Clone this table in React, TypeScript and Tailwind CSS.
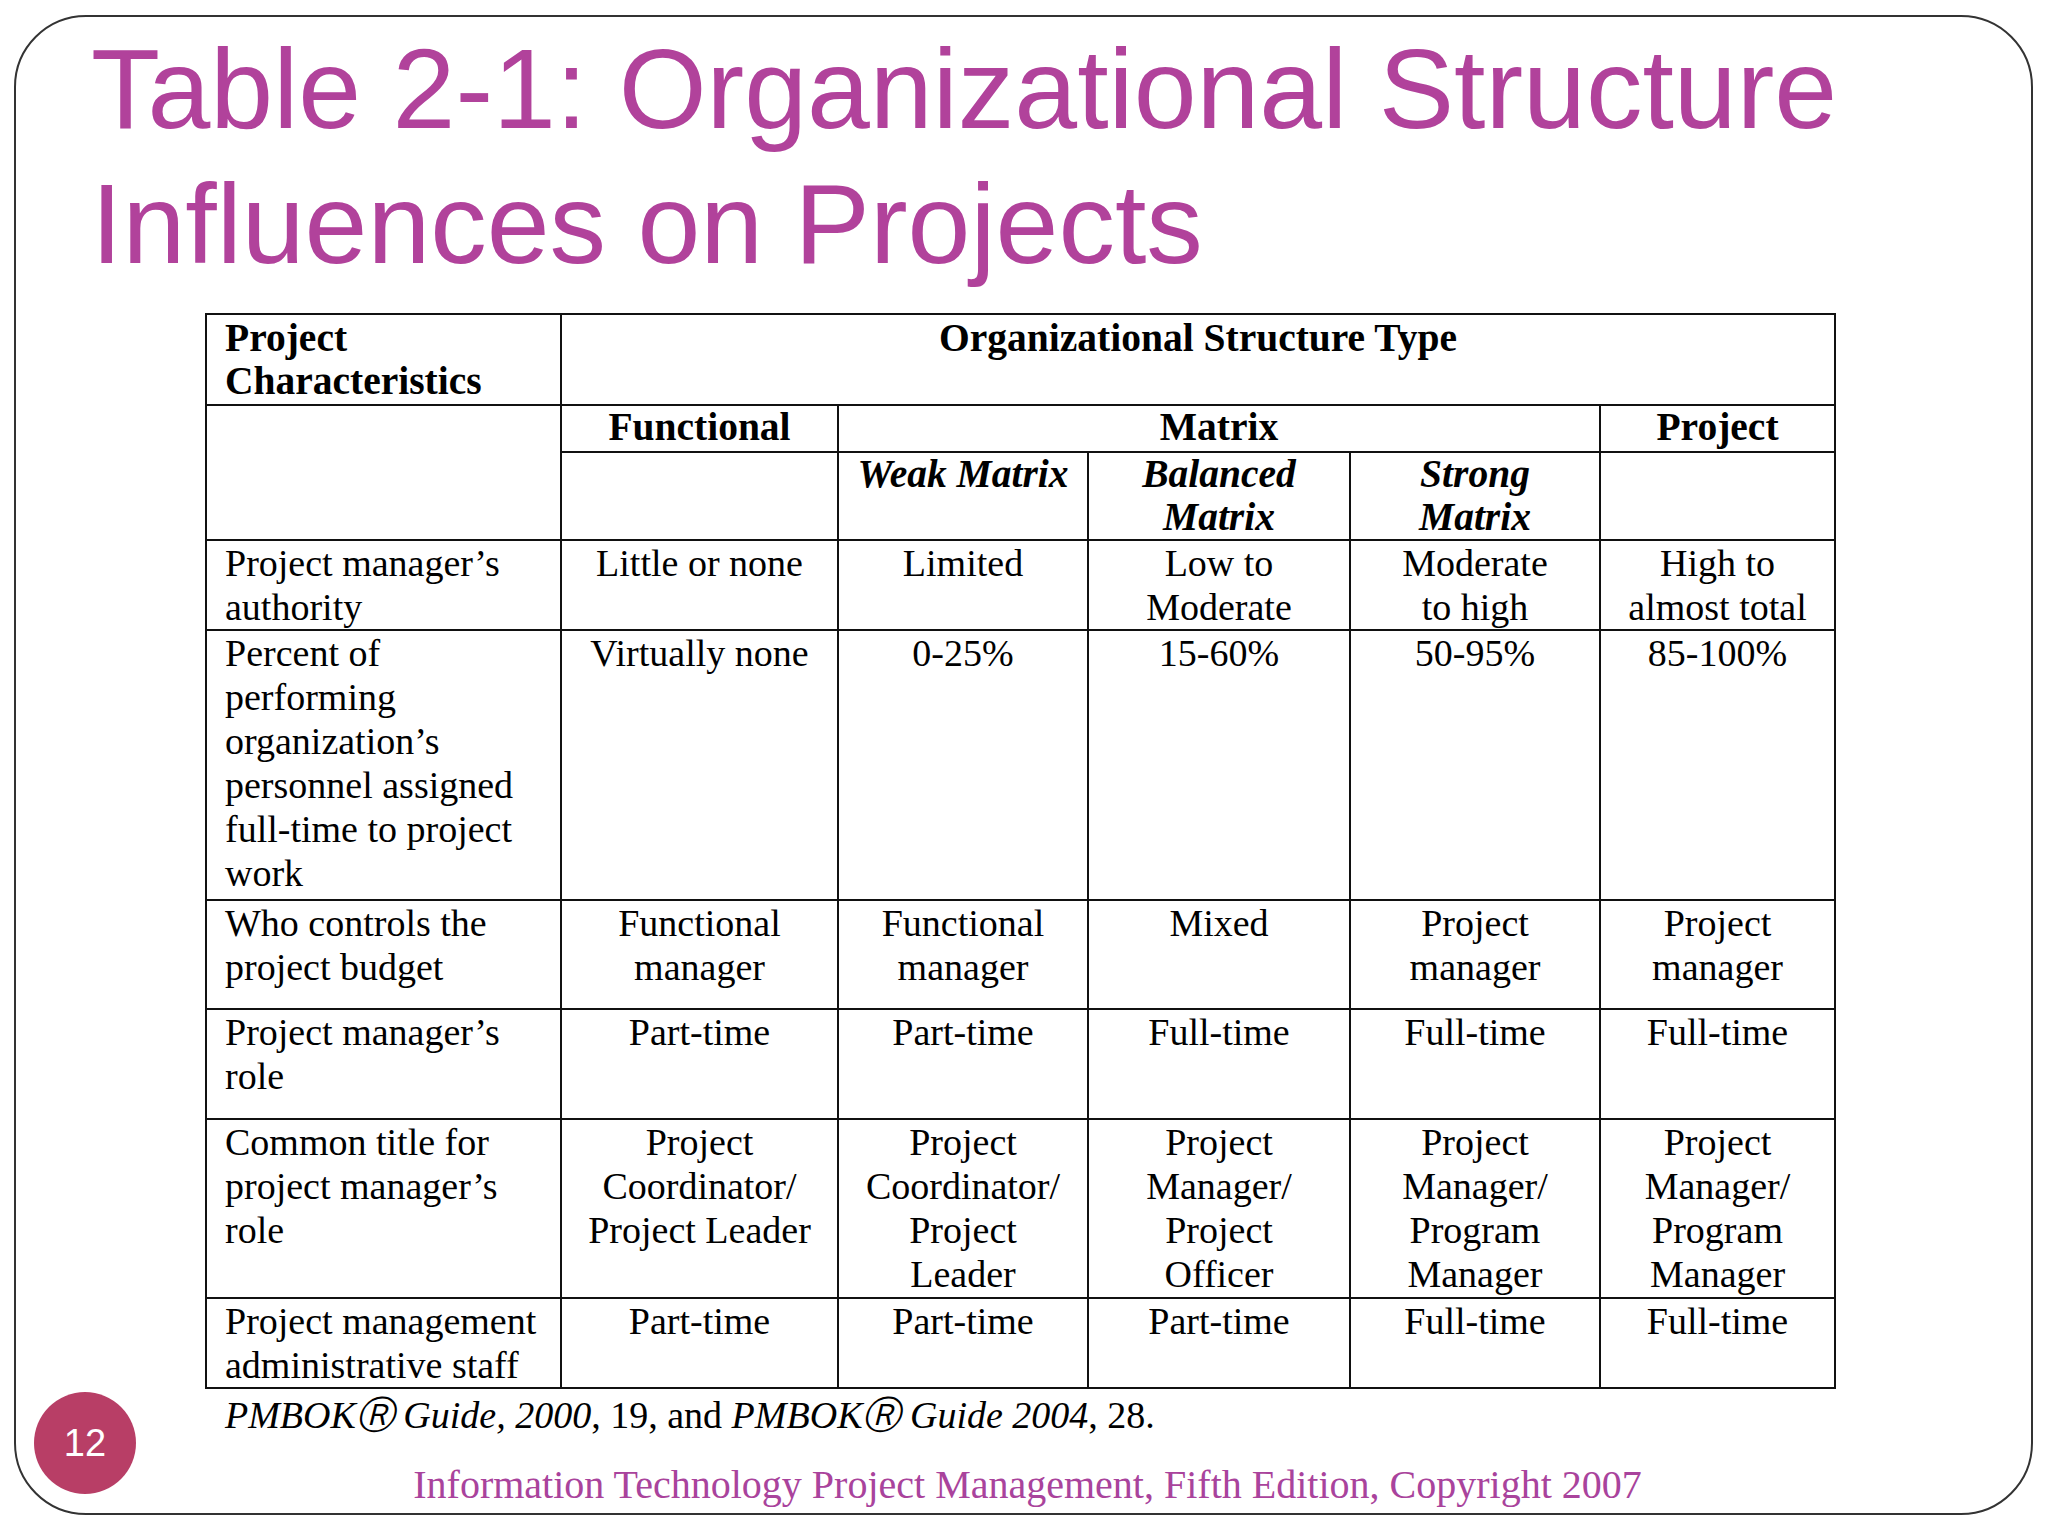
const serif = { fontFamily: '"Liberation Serif", "Times New Roman", serif' };

type Row = { h: string; cells: string[][] };

const body: Row[] = [
  {
    h: 'h-[90px]',
    cells: [
      ['Project manager’s', 'authority'],
      ['Little or none'],
      ['Limited'],
      ['Low to', 'Moderate'],
      ['Moderate', 'to high'],
      ['High to', 'almost total'],
    ],
  },
  {
    h: 'h-[270px]',
    cells: [
      ['Percent of', 'performing', 'organization’s', 'personnel assigned', 'full-time to project', 'work'],
      ['Virtually none'],
      ['0-25%'],
      ['15-60%'],
      ['50-95%'],
      ['85-100%'],
    ],
  },
  {
    h: 'h-[109px]',
    cells: [
      ['Who controls the', 'project budget'],
      ['Functional', 'manager'],
      ['Functional', 'manager'],
      ['Mixed'],
      ['Project', 'manager'],
      ['Project', 'manager'],
    ],
  },
  {
    h: 'h-[110px]',
    cells: [['Project manager’s', 'role'], ['Part-time'], ['Part-time'], ['Full-time'], ['Full-time'], ['Full-time']],
  },
  {
    h: 'h-[179px]',
    cells: [
      ['Common title for', 'project manager’s', 'role'],
      ['Project', 'Coordinator/', 'Project Leader'],
      ['Project', 'Coordinator/', 'Project', 'Leader'],
      ['Project', 'Manager/', 'Project', 'Officer'],
      ['Project', 'Manager/', 'Program', 'Manager'],
      ['Project', 'Manager/', 'Program', 'Manager'],
    ],
  },
  {
    h: 'h-[90px]',
    cells: [
      ['Project management', 'administrative staff'],
      ['Part-time'],
      ['Part-time'],
      ['Part-time'],
      ['Full-time'],
      ['Full-time'],
    ],
  },
];

function Lines({ lines }: { lines: string[] }) {
  return (
    <>
      {lines.map((l, i) => (
        <div key={i}>{l}</div>
      ))}
    </>
  );
}

const cell = 'border-2 border-[#111] align-top p-0';

export default function App() {
  return (
    <div className="w-[2048px] h-[1536px] bg-white pt-[15px] pl-[14px]">
      <div className="relative w-[2019px] h-[1500px] border-2 border-[#333] rounded-[72px] flex flex-col">
        <h1
          className="mt-[5px] pl-[75px] text-[113px] leading-[135px] text-[#b1429b]"
          style={{ fontFamily: '"Liberation Sans", Arial, sans-serif' }}
        >
          Table 2-1: Organizational Structure
          <br />
          Influences on Projects
        </h1>

        <div className="ml-[189px] mt-[21px] text-[38px] leading-[44px] text-black" style={serif}>
          <table className="table-fixed border-collapse w-[1629px]">
            <colgroup>
              <col className="w-[355px]" />
              <col className="w-[277px]" />
              <col className="w-[250px]" />
              <col className="w-[262px]" />
              <col className="w-[250px]" />
              <col className="w-[235px]" />
            </colgroup>
            <tbody>
              <tr className="h-[91px] font-bold text-[39.5px]">
                <td className={`${cell} pl-[18px] leading-[43px] pt-[2px]`}>
                  Project
                  <br />
                  Characteristics
                </td>
                <td className={`${cell} text-center leading-[43px] pt-[2px]`} colSpan={5}>
                  Organizational Structure Type
                </td>
              </tr>
              <tr className="h-[47px] font-bold text-[39.5px] leading-[43px]">
                <td className={cell} rowSpan={2}></td>
                <td className={`${cell} text-center`}>Functional</td>
                <td className={`${cell} text-center`} colSpan={3}>
                  Matrix
                </td>
                <td className={`${cell} text-center`}>Project</td>
              </tr>
              <tr className="h-[88px] font-bold italic text-[39.5px] leading-[43px]">
                <td className={cell}></td>
                <td className={`${cell} text-center`}>Weak Matrix</td>
                <td className={`${cell} text-center`}>
                  Balanced
                  <br />
                  Matrix
                </td>
                <td className={`${cell} text-center`}>
                  Strong
                  <br />
                  Matrix
                </td>
                <td className={cell}></td>
              </tr>
              {body.map((row, r) => (
                <tr key={r} className={row.h}>
                  {row.cells.map((lines, c) => (
                    <td key={c} className={c === 0 ? `${cell} pl-[18px] whitespace-nowrap` : `${cell} text-center whitespace-nowrap`}>
                      <Lines lines={lines} />
                    </td>
                  ))}
                </tr>
              ))}
            </tbody>
          </table>
          <p className="mt-[4px] pl-[20px]">
            <i>PMBOKⓇ Guide, 2000</i>, 19, and <i>PMBOKⓇ Guide 2004</i>, 28.
          </p>
        </div>

        <p className="mt-[23px] text-center text-[40px] leading-[50px] text-[#a9439c] pl-[8px]" style={serif}>
          Information Technology Project Management, Fifth Edition, Copyright 2007
        </p>

        <div
          className="absolute left-[18px] top-[1375px] w-[102px] h-[102px] rounded-full bg-[#b83e66] flex items-center justify-center text-white text-[38px]"
          style={{ fontFamily: '"Liberation Sans", Arial, sans-serif' }}
        >
          12
        </div>
      </div>
    </div>
  );
}
